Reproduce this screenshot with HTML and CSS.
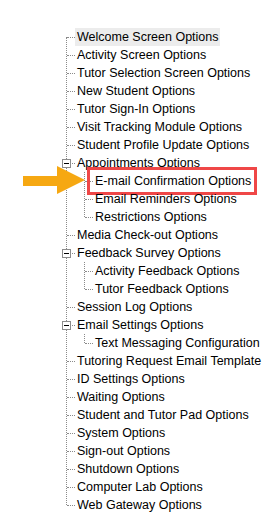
FILE: index.html
```html
<!DOCTYPE html>
<html lang="en">
  <head>
    <meta charset="UTF-8" />
    <title>Options Tree</title>
    <link rel="stylesheet" href="styles.css">
  </head>
  <body>
    <div class="tree">
      <ul class="root">
        <li><span class="label selected">Welcome Screen Options</span></li>
        <li><span class="label">Activity Screen Options</span></li>
        <li><span class="label">Tutor Selection Screen Options</span></li>
        <li><span class="label">New Student Options</span></li>
        <li><span class="label">Tutor Sign-In Options</span></li>
        <li><span class="label">Visit Tracking Module Options</span></li>
        <li><span class="label">Student Profile Update Options</span></li>
        <li class="open">
          <span class="toggle"></span><span class="label">Appointments Options</span>
          <ul>
            <li class="pointed">
              <svg class="arrow" width="64" height="30" viewBox="0 0 64 30">
                <rect x="0" y="10" width="36" height="10" fill="#f6a812" />
                <polygon points="34,0 62,14 34,28" fill="#f6a812" />
              </svg>
              <span class="label marked">E-mail Confirmation Options</span>
            </li>
            <li><span class="label">Email Reminders Options</span></li>
            <li><span class="label">Restrictions Options</span></li>
          </ul>
        </li>
        <li><span class="label">Media Check-out Options</span></li>
        <li class="open">
          <span class="toggle"></span><span class="label">Feedback Survey Options</span>
          <ul>
            <li><span class="label">Activity Feedback Options</span></li>
            <li><span class="label">Tutor Feedback Options</span></li>
          </ul>
        </li>
        <li><span class="label">Session Log Options</span></li>
        <li class="open">
          <span class="toggle"></span><span class="label">Email Settings Options</span>
          <ul>
            <li><span class="label">Text Messaging Configuration</span></li>
          </ul>
        </li>
        <li><span class="label">Tutoring Request Email Template</span></li>
        <li><span class="label">ID Settings Options</span></li>
        <li><span class="label">Waiting Options</span></li>
        <li><span class="label">Student and Tutor Pad Options</span></li>
        <li><span class="label">System Options</span></li>
        <li><span class="label">Sign-out Options</span></li>
        <li><span class="label">Shutdown Options</span></li>
        <li><span class="label">Computer Lab Options</span></li>
        <li><span class="label">Web Gateway Options</span></li>
      </ul>
    </div>
  </body>
</html>
```

FILE: styles.css
```css
body {
  margin: 0;
  background: white;
  font-family: "Liberation Sans", Arial, sans-serif;
  font-size: 12.5px;
  color: #000;
}
.tree {
  padding: 28px 0 0 66px;
}
ul {
  list-style: none;
  margin: 0;
  padding: 0;
  position: relative;
}
/* vertical connector of each level */
ul::before {
  content: "";
  position: absolute;
  left: 0;
  top: 0;
  bottom: 9px;
  border-left: 1px dotted #8a8a8a;
}
ul.root::before {
  top: 9px;
}
li ul {
  margin-left: 9px;
}
li {
  position: relative;
  padding-left: 9px;
  line-height: 18px;
}
/* horizontal connector */
li::before {
  content: "";
  position: absolute;
  left: 1px;
  top: 9px;
  width: 8px;
  border-top: 1px dotted #8a8a8a;
}
.label {
  display: inline-block;
  position: relative;
  height: 18px;
  padding: 0 1px 0 2px;
  white-space: nowrap;
}
.selected {
  background: #ececec;
}
.toggle {
  position: absolute;
  left: -4px;
  top: 5px;
  width: 9px;
  height: 9px;
  box-sizing: border-box;
  border: 1px solid #8c8c8c;
  background: white;
  z-index: 1;
}
.toggle::after {
  content: "";
  position: absolute;
  left: 1px;
  top: 3px;
  width: 5px;
  border-top: 1px solid #000;
}
.marked::after {
  content: "";
  position: absolute;
  left: -6px;
  top: -5px;
  width: 170px;
  height: 28px;
  box-sizing: border-box;
  border: 3px solid #ef4747;
}
.arrow {
  position: absolute;
  left: -61px;
  top: -6px;
}
```
